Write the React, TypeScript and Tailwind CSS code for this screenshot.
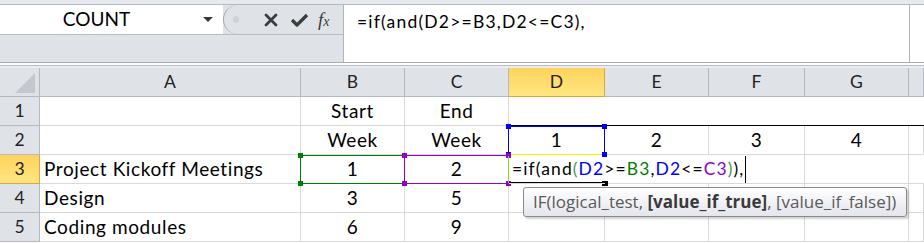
import React from "react";

const cellFont = "font-['Lato','Liberation_Sans',sans-serif]";

function Corners({ color, x, y, w, h }: { color: string; x: number; y: number; w: number; h: number }) {
  const pts = [
    [x, y],
    [x + w, y],
    [x, y + h],
    [x + w, y + h],
  ];
  return (
    <>
      {pts.map(([px, py], i) => (
        <span
          key={i}
          className="absolute h-[5px] w-[5px]"
          style={{ left: px - 2, top: py - 2, background: color }}
        />
      ))}
    </>
  );
}

function RangeBox({ color, x, y, w, h, bottom }: { color: string; x: number; y: number; w: number; h: number; bottom?: string }) {
  return (
    <>
      <div
        className="absolute border"
        style={{ left: x, top: y, width: w + 1, height: h + 1, borderColor: color, borderBottomColor: bottom ?? color }}
      />
      <Corners color={color} x={x} y={y} w={w} h={h} />
    </>
  );
}

function FormulaText({ colored }: { colored?: boolean }) {
  if (!colored) return <span className="tracking-[1.2px]">=if(and(D2&gt;=B3,D2&lt;=C3),</span>;
  return (
    <span className="tracking-[1.1px]">
      =if(and<span className="text-[#3f9a4a]">(</span>
      <span className="text-[#0000ff]">D2</span>&gt;=
      <span className="text-[#008000]">B3</span>,
      <span className="text-[#0000ff]">D2</span>&lt;=
      <span className="text-[#9400c8]">C3</span>
      <span className="text-[#3f9a4a]">)</span>),
    </span>
  );
}

const cols = ["A", "B", "C", "D", "E", "F", "G", ""];

export default function App() {
  const hdr = "flex items-center justify-center border-r border-b border-[#b2b9c2] bg-[#dfe3e8] text-[17.5px] text-[#222]";
  const hdrSel = "flex items-center justify-center border-r border-b border-[#e3a23c] bg-gradient-to-b from-[#ffd35c] to-[#ffe680] text-[17.5px] text-[#222]";
  const cell = "flex items-center border-r border-b border-[#d9d9d9] text-[19px] tracking-[0.6px] text-black";

  return (
    <div className={`h-[243px] w-[924px] overflow-hidden bg-white ${cellFont}`}>
      {/* formula bar */}
      <div className="h-[5px] border-b border-[#b3bac3] bg-[#e6e9ee]" />
      <div className="flex h-[58px] border-b border-[#a6adb6]">
        <div className="flex w-[344px] flex-col border-r border-[#aeb5be] bg-[#dfe3e8]">
          <div className="flex h-[30px] border-b border-[#b6bdc6]">
            <div className="relative flex w-[223px] items-center bg-white">
              <span className="w-full pr-[30px] text-center text-[19px] text-black">COUNT</span>
              <span className="absolute left-[203px] top-[12px] h-0 w-0 border-x-[5px] border-t-[5px] border-x-transparent border-t-[#3a3a3a]" />
            </div>
            <div className="flex flex-1 items-center rounded-l-[15px] border-l border-[#9ea6b0] bg-[#dfe3e8]">
              <span className="ml-[9px] h-[7px] w-[6px] rounded-full bg-[#cfd3d8]" />
              <svg className="ml-[25px]" width="14" height="14" viewBox="0 0 14 14">
                <path d="M2 2 L12 12 M12 2 L2 12" stroke="#3c3c3c" strokeWidth="2.8" strokeLinecap="round" />
              </svg>
              <svg className="ml-[12px]" width="19" height="16" viewBox="0 0 19 16">
                <path d="M2 8 L7 13 L17 3" stroke="#3c3c3c" strokeWidth="3.2" fill="none" strokeLinejoin="round" />
              </svg>
              <span className="ml-[9px] font-['Liberation_Serif',serif] text-[19px] italic leading-none text-[#3c3c3c]">
                f<span className="text-[14px]">x</span>
              </span>
            </div>
          </div>
          <div className="flex-1" />
        </div>
        <div className="flex flex-1">
          <div className="flex-1 pl-[13px] pt-[5px] text-[17.5px] leading-[24px] text-black">
            <FormulaText />
          </div>
          <div className="w-[15px] border-l border-[#aeb5be]" />
        </div>
      </div>
      <div className="h-[2px] bg-white" />
      <div className="h-[3px] border-t border-[#b9bfc7] bg-[#e9ecf0]" />

      {/* sheet */}
      <div className="relative">
        <div className="grid grid-cols-[40px_261px_104px_104px_96px_104px_96px_104px_1fr] grid-rows-[29px_29px_29px_29px_29px_29px]">
          {/* header */}
          <div className="relative border-r border-b border-[#b2b9c2] bg-[#dfe3e8]">
            <span className="absolute bottom-[3px] right-[4px] h-0 w-0 border-b-[20px] border-l-[20px] border-b-[#c3c8ce] border-l-transparent" />
          </div>
          {cols.map((c, i) => (
            <div key={i} className={c === "D" ? hdrSel : hdr}>
              {c}
            </div>
          ))}

          {/* row 1 */}
          <div className={hdr}>1</div>
          <div className={cell} />
          <div className={`${cell} justify-center`}>Start</div>
          <div className={`${cell} justify-center`}>End</div>
          <div className="col-span-5 border-b border-black" />

          {/* row 2 */}
          <div className={hdr}>2</div>
          <div className={cell} />
          <div className={`${cell} justify-center`}>Week</div>
          <div className={`${cell} justify-center`}>Week</div>
          <div className={`${cell} justify-center`}>1</div>
          <div className={`${cell} justify-center`}>2</div>
          <div className={`${cell} justify-center`}>3</div>
          <div className={`${cell} justify-center`}>4</div>
          <div className={cell} />

          {/* row 3 */}
          <div className={hdrSel}>3</div>
          <div className={`${cell} pl-[4px]`}>Project Kickoff Meetings</div>
          <div className={`${cell} justify-center`}>1</div>
          <div className={`${cell} justify-center`}>2</div>
          <div className="relative z-10 flex items-center border-b border-[#d9d9d9] pl-[3px] text-[17.5px] text-black">
            <span className="whitespace-nowrap">
              <FormulaText colored />
            </span>
            <span className="ml-[1px] h-[27px] w-[1px] shrink-0 bg-black" />
          </div>
          <div className="border-b border-[#d9d9d9]" />
          <div className="border-r border-b border-[#d9d9d9]" />
          <div className="border-r border-b border-[#d9d9d9]" />
          <div className="border-b border-[#d9d9d9]" />

          {/* row 4 */}
          <div className={hdr}>4</div>
          <div className={`${cell} pl-[4px]`}>Design</div>
          <div className={`${cell} justify-center`}>3</div>
          <div className={`${cell} justify-center`}>5</div>
          <div className={cell} />
          <div className={cell} />
          <div className={cell} />
          <div className={cell} />
          <div className={cell} />

          {/* row 5 */}
          <div className={hdr}>5</div>
          <div className={`${cell} pl-[4px]`}>Coding modules</div>
          <div className={`${cell} justify-center`}>6</div>
          <div className={`${cell} justify-center`}>9</div>
          <div className={cell} />
          <div className={cell} />
          <div className={cell} />
          <div className={cell} />
          <div className={cell} />
        </div>

        {/* overlays: reference ranges, active cell, tooltip */}
        <RangeBox color="#0000ff" x={508} y={58} w={96} h={28} bottom="#f2f000" />
        <RangeBox color="#008000" x={300} y={87} w={104} h={28} />
        <RangeBox color="#9400c8" x={404} y={87} w={104} h={28} />
        <div className="absolute left-[508px] top-[88px] h-[27px] w-[1px] bg-[#80e020]" />
        <div className="absolute left-[509px] top-[114px] h-[2px] w-[96px] bg-black" />
        <div className="absolute left-[602px] top-[113px] h-[5px] w-[6px] bg-black" />

        <div className="absolute left-[523px] top-[119px] z-20 flex h-[30px] w-[384px] items-center whitespace-nowrap rounded-[3px] border border-[#8a8a8a] bg-gradient-to-b from-white to-[#e4e5ee] pl-[9px] font-['Open_Sans','Noto_Sans',sans-serif] text-[17px] tracking-[0px] text-[#5a5a5a] shadow-[2px_2px_2px_rgba(0,0,0,0.18)]">
          IF(logical_test,&nbsp;<b className="font-bold text-[#3a3a3a]">[value_if_true]</b>, [value_if_false])
        </div>
      </div>
    </div>
  );
}
